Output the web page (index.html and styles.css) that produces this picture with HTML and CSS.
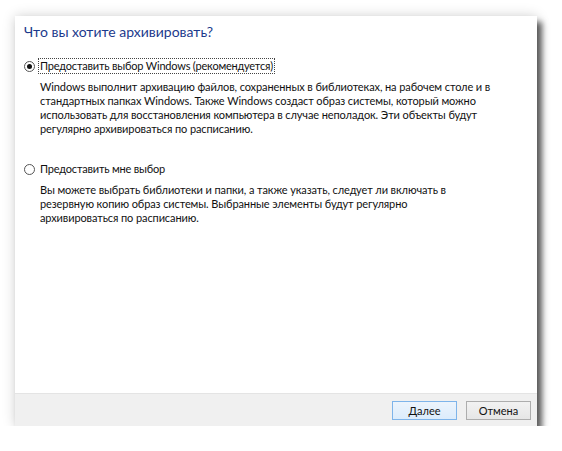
FILE: index.html
```html
<!DOCTYPE html>
<html lang="ru">
<head>
<meta charset="utf-8">
<link rel="stylesheet" href="styles.css">
</head>
<body>
<div class="window">
  <div class="content">
    <h1 class="title">Что вы хотите архивировать?</h1>
    <div class="option">
      <div class="option-head">
        <span class="radio checked"></span>
        <span class="label focus">Предоставить выбор Windows (рекомендуется)</span>
      </div>
      <p class="desc">Windows выполнит архивацию файлов, сохраненных в библиотеках, на рабочем столе и в<br>стандартных папках Windows. Также Windows создаст образ системы, который можно<br>использовать для восстановления компьютера в случае неполадок. Эти объекты будут<br>регулярно архивироваться по расписанию.</p>
    </div>
    <div class="option second">
      <div class="option-head">
        <span class="radio"></span>
        <span class="label">Предоставить мне выбор</span>
      </div>
      <p class="desc">Вы можете выбрать библиотеки и папки, а также указать, следует ли включать в<br>резервную копию образ системы. Выбранные элементы будут регулярно<br>архивироваться по расписанию.</p>
    </div>
  </div>
  <div class="footer">
    <button class="btn default">Далее</button>
    <button class="btn">Отмена</button>
  </div>
</div>
</body>
</html>
```
FILE: styles.css
```css
html, body {
  margin: 0;
  padding: 0;
  background: #ffffff;
}
body {
  padding: 16px 0 0 15px;
  font-family: "Lato", "Open Sans", sans-serif;
  font-size: 11px;
  color: #111;
}
.window {
  width: 522px;
  height: 410px;
  background: #fff;
  display: flex;
  flex-direction: column;
  box-shadow: 5px 6px 6px rgba(0,0,0,0.62), 0 0 12px rgba(0,0,0,0.18);
}
.content {
  flex: 1;
  padding: 6px 0 0 9px;
  white-space: nowrap;
}
.title {
  margin: 0 0 16px 0;
  font-weight: normal;
  font-size: 14px;
  color: #1c3a8c;
  line-height: 20px;
}
.option-head {
  display: flex;
  align-items: center;
  gap: 3px;
  height: 16px;
}
.radio {
  width: 11px;
  height: 11px;
  border: 1px solid #555;
  border-radius: 50%;
  box-sizing: border-box;
  background: #fff;
  position: relative;
}
.radio.checked::after {
  content: "";
  position: absolute;
  left: 2px;
  top: 2px;
  width: 5px;
  height: 5px;
  border-radius: 50%;
  background: #111;
}
.label {
  padding: 0 1px;
  line-height: 14px;
  border: 1px solid transparent;
  letter-spacing: -0.2px;
}
.label.focus {
  border: 1px dotted #444;
}
.desc {
  margin: 6px 0 0 16px;
  line-height: 14px;
  letter-spacing: -0.1px;
}
.second {
  margin-top: 25px;
}
.footer {
  height: 32px;
  background: #f0f0f0;
  border-top: 1px solid #e4e4e4;
  display: flex;
  justify-content: flex-end;
  align-items: center;
  gap: 9px;
  padding-right: 6px;
}
.btn {
  width: 65px;
  height: 19px;
  font-family: inherit;
  font-size: 11px;
  color: #111;
  border: 1px solid #adadad;
  background: linear-gradient(#f2f2f2, #e6e6e6);
  padding: 0;
}
.btn.default {
  border-color: #7eb4ea;
  background: linear-gradient(#ecf4fc, #dcecfc);
}
```
